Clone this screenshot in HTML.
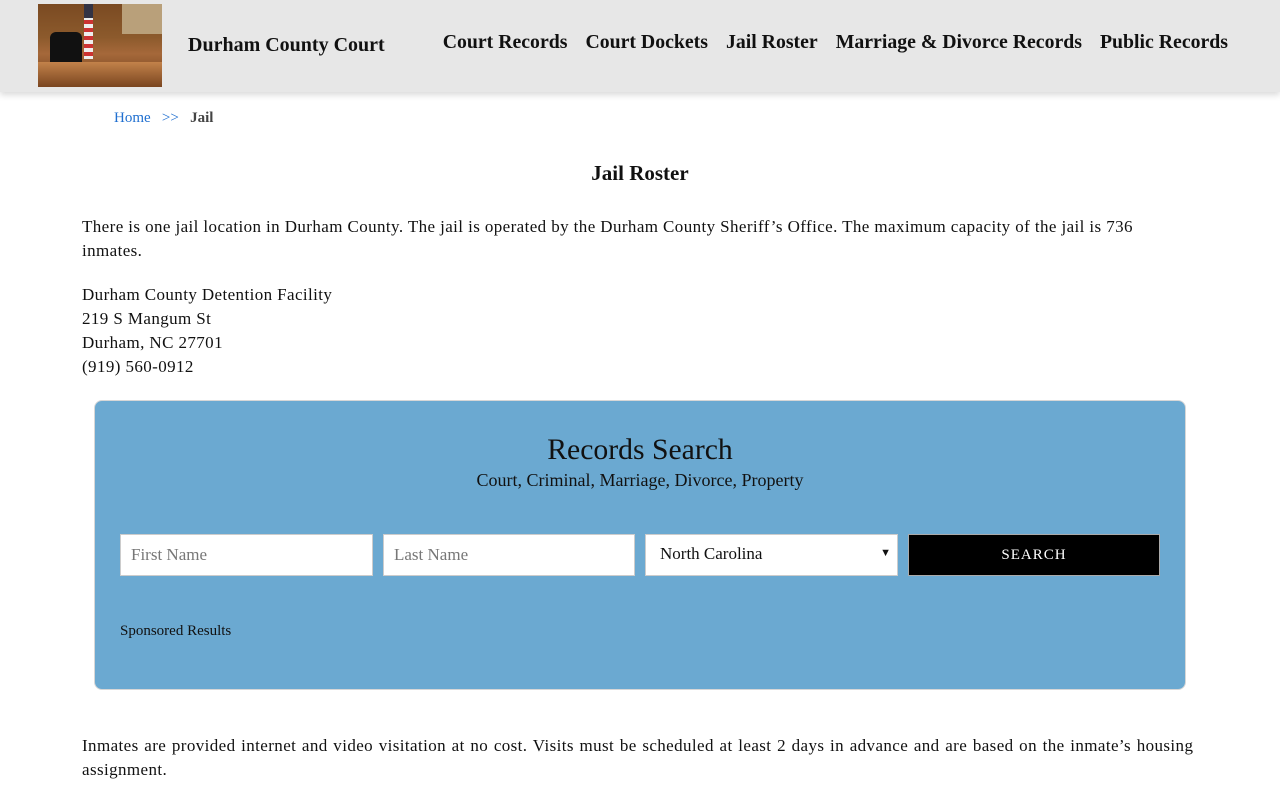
<!DOCTYPE html>
<html><head><meta charset="utf-8"><style>
*{box-sizing:border-box}
body{margin:0;background:#fff;font-family:"Liberation Serif",serif;color:#111;width:1280px;height:800px;overflow:hidden}
header{position:absolute;left:0;top:0;width:1280px;height:92px;background:#e7e7e7;box-shadow:0 3px 6px rgba(0,0,0,.15)}
.logo{position:absolute;left:38px;top:4px;width:124px;height:83px;background:linear-gradient(180deg,#7a4a22 0%,#8c5a2c 40%,#a5683a 60%,#6b3c1a 100%);overflow:hidden}
.logo .wall{position:absolute;right:0;top:0;width:40px;height:30px;background:#b9a07a}
.logo .chair{position:absolute;left:12px;top:28px;width:32px;height:34px;background:#111;border-radius:6px 6px 2px 2px}
.logo .flag{position:absolute;left:46px;top:0;width:9px;height:55px;background:repeating-linear-gradient(180deg,#c33 0 4px,#eee 4px 8px)}
.logo .flag:before{content:"";position:absolute;left:0;top:0;width:9px;height:14px;background:#334}
.logo .desk{position:absolute;left:0;top:58px;width:124px;height:25px;background:linear-gradient(#c2824a,#7a4520)}
.title{position:absolute;left:188px;top:34px;font-size:20px;font-weight:bold}
nav{position:absolute;top:31px;right:52px;font-size:19.8px;font-weight:bold}
nav span{margin-left:18px}
.bc{position:absolute;left:114px;top:110px;font-size:15px}
.bc a{color:#1f6fd0;text-decoration:none}
.bc b{color:#444}
h1{position:absolute;left:0;width:1280px;top:161px;margin:0;text-align:center;font-size:21px}
p{margin:0;font-size:17px;line-height:24px;letter-spacing:.4px}
.p1{position:absolute;left:82px;top:215px;width:1140px}
.p2{position:absolute;left:82px;top:283px}
.p3{position:absolute;left:82px;top:734px;width:1160px;word-spacing:1px}
.box{position:absolute;left:94px;top:400px;width:1092px;height:290px;background:#6ba9d1;border-radius:8px;border:1px solid #d7d7d7}
.rs{position:absolute;top:33px;width:100%;text-align:center;font-size:29.7px;font-weight:normal}
.sub{position:absolute;top:69px;width:100%;text-align:center;font-size:18px}
.in{position:absolute;top:133px;height:42px;background:#fff;border:1px solid #ccc;font-size:17px;color:#777;padding:10px 10px}
.btn{position:absolute;left:813px;top:133px;width:252px;height:42px;background:#000;color:#fff;text-align:center;font-size:15px;letter-spacing:1px;padding-top:12px;border:1px solid #aaa}
.sp{position:absolute;left:25px;top:222px;font-size:15px}
</style></head><body>
<header>
<div class="logo"><div class="wall"></div><div class="flag"></div><div class="chair"></div><div class="desk"></div></div>
<div class="title">Durham County Court</div>
<nav><span>Court Records</span><span>Court Dockets</span><span>Jail Roster</span><span>Marriage &amp; Divorce Records</span><span>Public Records</span></nav>
</header>
<div class="bc"><a>Home</a>&nbsp;&nbsp; <a>&gt;&gt;</a>&nbsp;&nbsp; <b>Jail</b></div>
<h1>Jail Roster</h1>
<p class="p1">There is one jail location in Durham County. The jail is operated by the Durham County Sheriff’s Office. The maximum capacity of the jail is 736<br>inmates.</p>
<p class="p2">Durham County Detention Facility<br>219 S Mangum St<br>Durham, NC 27701<br>(919) 560-0912</p>
<div class="box">
<div class="rs">Records Search</div>
<div class="sub">Court, Criminal, Marriage, Divorce, Property</div>
<div class="in" style="left:25px;width:253px">First Name</div>
<div class="in" style="left:288px;width:252px">Last Name</div>
<div class="in" style="left:550px;width:253px;color:#111;padding-left:14px;padding-top:9px">North Carolina<span style="position:absolute;right:6px;top:12px;font-size:11px">&#9660;</span></div>
<div class="btn">SEARCH</div>
<div class="sp">Sponsored Results</div>
</div>
<p class="p3">Inmates are provided internet and video visitation at no cost. Visits must be scheduled at least 2 days in advance and are based on the inmate’s housing<br>assignment.</p>
</body></html>
